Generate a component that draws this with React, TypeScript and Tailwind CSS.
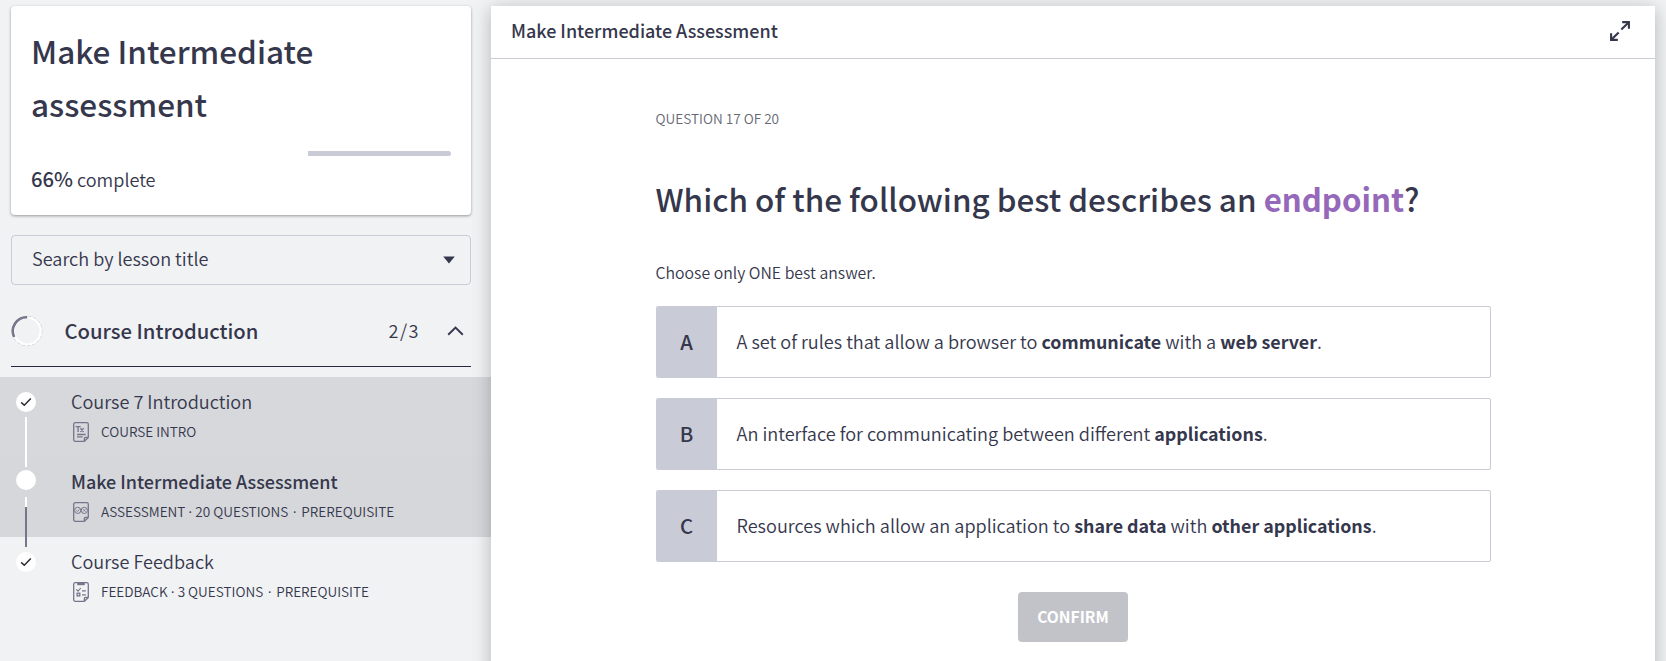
import type { ReactNode } from 'react';

function ExpandIcon() {
  return (
    <svg width="20" height="20" viewBox="0 0 20 20" fill="none" stroke="#35374c" strokeWidth="2.1">
      <path d="M12.2 1.1H18.9V7.8" />
      <path d="M18.6 1.4L11.3 8.6" />
      <path d="M1.1 12.2V18.9H7.8" />
      <path d="M1.4 18.6L8.7 11.4" />
    </svg>
  );
}

function CheckIcon() {
  return (
    <svg width="12" height="10" viewBox="0 0 12 10" fill="none" stroke="#2b2c33" strokeWidth="1.5">
      <path d="M1.2 5.4L4.3 8.3L10.8 1.6" />
    </svg>
  );
}

function Page({ children }: { children: ReactNode }) {
  return (
    <svg className="shrink-0" width="16" height="20" viewBox="0 0 16 20" fill="none" stroke="#74768a" strokeWidth="1.3">
      {children}
      <path d="M11.4 19.3H2.2C1.3 19.3 .7 18.7 .7 17.8V2.2C.7 1.3 1.3 .7 2.2 .7H13.8C14.7 .7 15.3 1.3 15.3 2.2V15.4L11.4 19.3V16.4C11.4 15.8 11.8 15.4 12.4 15.4H15.3" />
    </svg>
  );
}

const textIcon = (
  <Page>
    <path d="M2.6 4.6H7.6M5.1 4.6V9.9M7.4 6.3L10.6 9.9M10.6 6.3L7.4 9.9" strokeWidth="1.35" />
    <path d="M4 12.5H12.6M4 14.9H9.6" />
  </Page>
);
const assessmentIcon = (
  <Page>
    <circle cx="4.7" cy="8.4" r="3.1" strokeWidth="1" />
    <circle cx="11.3" cy="8.4" r="3.1" strokeWidth="1" />
    <path d="M3.2 8.5L4.4 9.6L6.4 7.3M10.1 7.2L12.5 9.6M12.5 7.2L10.1 9.6" strokeWidth=".9" />
  </Page>
);
const feedbackIcon = (
  <Page>
    <path d="M4.2 1.6H11.8" strokeWidth="3.2" />
    <path d="M3.2 7.4L5 9.1L7.8 6M9 8.9H12.8M9 12.9H12.8" strokeWidth="1.1" />
    <rect x="4.1" y="11.2" width="2.7" height="2.7" />
  </Page>
);

const white = 'bg-white';
const slate = 'bg-[#74768a]';

function Segment({ tone, size }: { tone: string; size: string }) {
  return <div className={`w-[2px] ${tone} ${size}`} />;
}

function Dot({ done = false }: { done?: boolean }) {
  return (
    <div className="flex size-5 items-center justify-center rounded-full bg-white">{done && <CheckIcon />}</div>
  );
}

interface LessonProps {
  title: string;
  current?: boolean;
  background: string;
  track: ReactNode;
  icon: ReactNode;
  meta: string[];
}

function Lesson({ title, current = false, background, track, icon, meta }: LessonProps) {
  const [kind, count, requirement] = meta;
  return (
    <li className={`flex h-20 pl-4 ${background}`}>
      <div className="flex w-5 flex-col items-center">{track}</div>
      <div className="flex flex-col pt-3 pl-[35px]">
        <div className={`h-6 leading-6 ${current ? 'text-[17.97px] font-medium' : 'text-[18.1px] font-[350]'}`}>
          {title}
        </div>
        <div className="mt-[9px] flex h-5 items-center pl-[2px]">
          {icon}
          <div className="-mt-[2px] flex pl-3 text-[13.57px] leading-[18px] font-[350]">
            <span>{kind}</span>
            {count && (
              <>
                <span className="flex w-[10px] justify-center">·</span>
                <span>{count}</span>
              </>
            )}
            {requirement && (
              <>
                <span className="flex w-[13px] justify-center">·</span>
                <span>{requirement}</span>
              </>
            )}
          </div>
        </div>
      </div>
    </li>
  );
}

function Sidebar() {
  return (
    <aside className="flex w-[491px] shrink-0 flex-col">
      <div className="flex flex-col px-[11px] pt-[6px]">
        <section className="h-[209px] w-[460px] rounded-[4px] bg-white px-5 pt-[18px] shadow-[0_1px_3px_rgba(0,0,0,0.38)]">
          <h1 className="text-[31.5px] leading-[53.3px] font-medium">
            Make Intermediate
            <br />
            assessment
          </h1>
          <div className="mt-[20.4px] flex h-[5px] justify-end">
            <div className="h-[5px] w-[143px] rounded-r-full bg-[#c9cbd6]" />
          </div>
          <p className="mt-[9px] flex items-baseline text-[18.1px] leading-[27px] font-[350]">
            <span className="text-[20.2px] font-medium">66%</span>
            <span className="pl-[4px]">complete</span>
          </p>
        </section>

        <div className="mt-5 flex h-[50px] w-[460px] items-center justify-between rounded-[4px] border border-[#c9cbd6] pr-[15px] pl-5">
          <span className="-mt-1 text-[18.1px] leading-6 font-[350]">Search by lesson title</span>
          <svg width="12" height="8" viewBox="0 0 12 8" fill="#35374e">
            <path d="M.2 .5H11.8L6 7.4Z" />
          </svg>
        </div>

        <div className="mt-[10px] flex h-[72px] w-[460px] items-center border-b border-[#282a44]">
          <svg width="32" height="32" viewBox="0 0 32 32" fill="none">
            <circle cx="16.2" cy="16" r="14.7" stroke="#b9bac2" strokeWidth=".8" strokeDasharray="3 2" />
            <circle cx="16.2" cy="16" r="13.5" stroke="#fff" strokeWidth="2.2" />
            <path d="M16.2 2.2A13.8 13.8 0 0 0 3.2 22" stroke="#74768a" strokeWidth="2.6" />
          </svg>
          <h2 className="flex-1 pl-[21.5px] text-[20.25px] leading-7 font-medium">Course Introduction</h2>
          <span className="-mt-[2px] text-[18.1px] leading-6 font-[350] tracking-[1.5px]">2/3</span>
          <svg className="mr-[7.5px] ml-[26.5px]" width="17" height="10" viewBox="0 0 17 10" fill="none" stroke="#35374e" strokeWidth="1.9">
            <path d="M1.2 8.8L8.5 1.6L15.8 8.8" />
          </svg>
        </div>
      </div>

      <ul className="mt-[10px] flex flex-col">
        <Lesson
          title="Course 7 Introduction"
          background="bg-[#d7d8dc]"
          icon={textIcon}
          meta={['COURSE INTRO']}
          track={
            <>
              <div className="h-[15px]" />
              <Dot done />
              <div className="h-[5px]" />
              <Segment tone={white} size="h-[40px]" />
            </>
          }
        />
        <Lesson
          title="Make Intermediate Assessment"
          current
          background="bg-[#d6d7db]"
          icon={assessmentIcon}
          meta={['ASSESSMENT', '20 QUESTIONS', 'PREREQUISITE']}
          track={
            <>
              <Segment tone={white} size="h-[10px]" />
              <div className="h-[3px]" />
              <Dot />
              <div className="h-[7px]" />
              <Segment tone={white} size="h-[10px]" />
              <Segment tone={slate} size="h-[30px]" />
            </>
          }
        />
        <Lesson
          title="Course Feedback"
          background="bg-transparent"
          icon={feedbackIcon}
          meta={['FEEDBACK', '3 QUESTIONS', 'PREREQUISITE']}
          track={
            <>
              <Segment tone={slate} size="h-[10px]" />
              <div className="h-[5px]" />
              <Dot done />
            </>
          }
        />
      </ul>
    </aside>
  );
}

function Answer({ letter, children }: { letter: string; children: ReactNode }) {
  return (
    <div className="flex h-[72px] w-[835px] overflow-hidden rounded-[2px] border border-[#c9cbd6]">
      <div className="flex w-[60px] items-center justify-center bg-[#c9cbd6] pb-[2px] text-[20.3px] leading-6 font-medium">
        {letter}
      </div>
      <p className="flex-1 pl-5 text-[18.12px] leading-[69px] font-[350]">{children}</p>
    </div>
  );
}

function Strong({ children }: { children: ReactNode }) {
  return <b className="text-[17.87px] font-bold">{children}</b>;
}

export default function App() {
  return (
    <div className="flex h-[661px] w-[1666px] overflow-hidden bg-[#f1f2f4] font-['Noto_Sans_CJK_JP','Noto_Sans_CJK_SC',sans-serif] text-[#35374c]">
      <Sidebar />
      <main className="mt-[6px] flex h-[675px] w-[1164px] shrink-0 flex-col bg-white shadow-[0_3px_17px_rgba(0,0,0,0.25)]">
        <header className="flex h-[53px] items-center justify-between border-b border-[#c9cbd6] pr-[25px] pb-1 pl-5">
          <span className="text-[17.98px] leading-6 font-medium">Make Intermediate Assessment</span>
          <div className="pt-[2px]">
            <ExpandIcon />
          </div>
        </header>
        <div className="flex flex-col pl-[164.5px]">
          <div className="mt-[49px] text-[13.6px] leading-5 font-[350] text-[#666873]">QUESTION 17 OF 20</div>
          <h2 className="mt-[46px] text-[31.45px] leading-[50px] font-medium">
            Which of the following best describes an{' '}
            <strong className="text-[31.2px] font-bold text-[#9568ba]">endpoint</strong>?
          </h2>
          <p className="mt-[38px] text-[15.83px] leading-[22px] font-[350]">Choose only ONE best answer.</p>
          <div className="mt-[22px] flex flex-col gap-5">
            <Answer letter="A">
              A set of rules that allow a browser to <Strong>communicate</Strong> with a <Strong>web server</Strong>.
            </Answer>
            <Answer letter="B">
              An interface for communicating between different <Strong>applications</Strong>.
            </Answer>
            <Answer letter="C">
              Resources which allow an application to <Strong>share data</Strong> with{' '}
              <Strong>other applications</Strong>.
            </Answer>
          </div>
          <div className="mt-[30px] flex w-[835px] justify-center">
            <button className="h-[50px] w-[110px] rounded-[4px] bg-[#c2c3c9] pb-[2px] text-[15.6px] leading-6 font-bold text-white">
              CONFIRM
            </button>
          </div>
        </div>
      </main>
    </div>
  );
}
